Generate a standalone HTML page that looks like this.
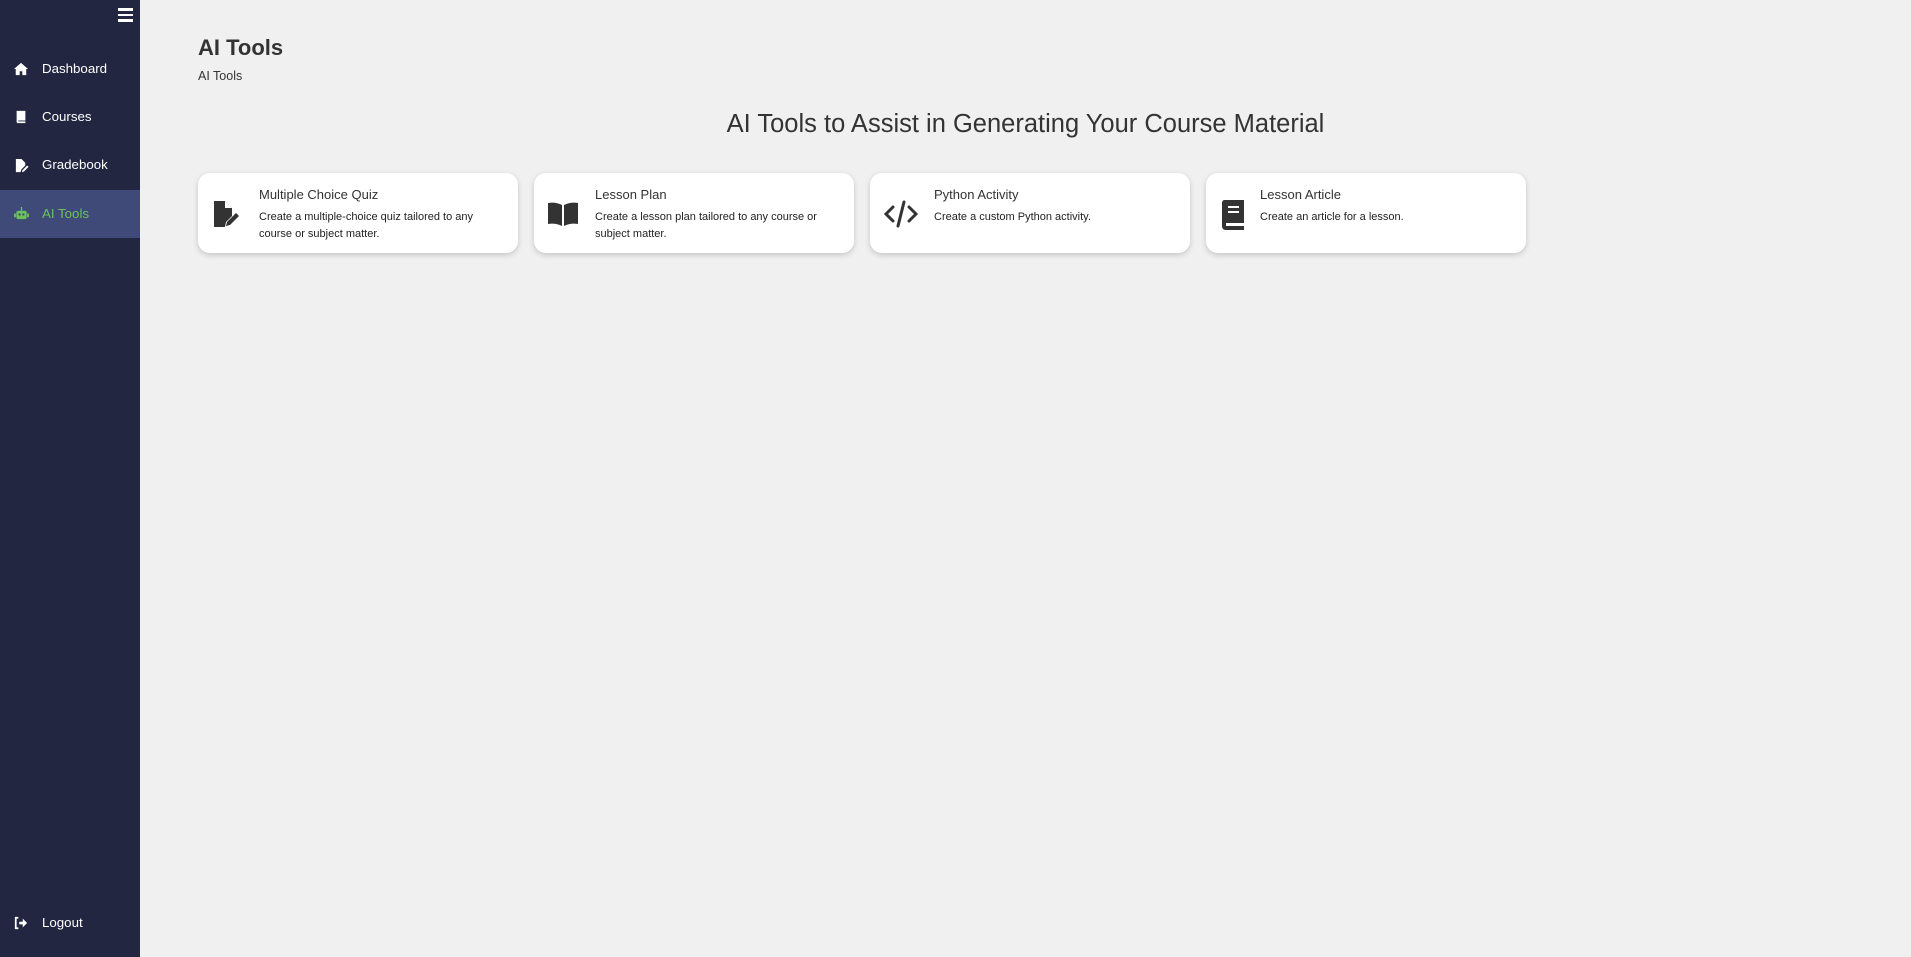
<!DOCTYPE html>
<html><head><meta charset="utf-8"><style>
*{box-sizing:border-box;margin:0;padding:0}
body{width:1911px;height:957px;background:#f0f0f0;font-family:"Liberation Sans",sans-serif;color:#333;position:relative;overflow:hidden}
.sb{position:absolute;left:0;top:0;width:140px;height:957px;background:#222640}
.ham{position:absolute;left:118px;top:8px;width:15px}
.ham i{display:block;height:2.5px;background:#fff;margin-bottom:3px}
.nav{position:absolute;left:0;width:140px;height:48px;color:#fff;font-size:13.3px;line-height:48px}
.nav svg{position:absolute;left:14px;top:17px}
.nav span{position:absolute;left:42px}
.act{background:#3f4a78;color:#6cc15a}
h1{position:absolute;left:198px;top:35px;font-size:22px;font-weight:bold;color:#333}
.sub{position:absolute;left:198px;top:69px;font-size:12.5px}
h2{position:absolute;left:0;right:0;padding-left:140px;text-align:center;top:110px;font-size:25.5px;font-weight:normal;color:#333}
.card{position:absolute;top:173px;width:320px;height:80px;background:#fff;border-radius:12px;box-shadow:0 2px 6px rgba(0,0,0,.18)}
.card svg{position:absolute;left:14px;top:26px}
.card .t{position:absolute;left:61px;top:14px;font-size:13px;color:#333}
.card .d{position:absolute;left:61px;top:36px;font-size:11px;line-height:17px;color:#222;width:250px}
</style></head><body>
<div class="sb">
<div class="ham"><i></i><i></i><i></i></div>
<div class="nav" style="top:45px"><svg width="14" height="14" viewBox="0 0 16 16"><path d="M8 1L0 8h2v7h4.5v-4.5h3V15H14V8h2z" fill="#fff"/></svg><span>Dashboard</span></div>
<div class="nav" style="top:93px"><svg width="14" height="14" viewBox="0 0 16 16"><path d="M3 1h10v11H5v1h8v2H4a2 2 0 0 1-1-1.5zM6 4h5v1H6zm0 2.5h5v1H6z" fill="#fff"/></svg><span>Courses</span></div>
<div class="nav" style="top:141px"><svg width="15" height="15" viewBox="0 0 16 16"><path d="M2 1h6l4 4v3l-4 4-1 3H2z" fill="#fff"/><path d="M9 13l5-5 1.5 1.5-5 5-2 .5z" fill="#fff"/></svg><span>Gradebook</span></div>
<div class="nav act" style="top:190px"><svg width="15" height="14" viewBox="0 0 16 15"><rect x="2.5" y="4" width="11" height="9" rx="2" fill="#6cc15a"/><rect x="0" y="7" width="2" height="4" fill="#6cc15a"/><rect x="14" y="7" width="2" height="4" fill="#6cc15a"/><rect x="7.3" y="0" width="1.4" height="4" fill="#6cc15a"/><circle cx="6" cy="8" r="1.2" fill="#3f4a78"/><circle cx="10" cy="8" r="1.2" fill="#3f4a78"/></svg><span>AI Tools</span></div>
<div class="nav" style="top:899px"><svg width="14" height="14" viewBox="0 0 16 16"><path d="M5 2H2v12h3" stroke="#fff" stroke-width="2" fill="none"/><path d="M6 6.5h4V3l5 5-5 5V9.5H6z" fill="#fff"/></svg><span>Logout</span></div>
</div>
<h1>AI Tools</h1>
<div class="sub">AI Tools</div>
<h2>AI Tools to Assist in Generating Your Course Material</h2>
<div class="card" style="left:198px"><svg width="30" height="30" viewBox="0 0 30 30"><path d="M2 2h11l7 7v8l-6 6-1 5H2z" fill="#333"/><path d="M13 2v7h7z" fill="#fff"/><path d="M15 23l9-9 3 3-9 9-4 1z" fill="#333"/></svg><div class="t">Multiple Choice Quiz</div><div class="d">Create a multiple-choice quiz tailored to any course or subject matter.</div></div>
<div class="card" style="left:534px"><svg width="30" height="30" viewBox="0 0 30 30"><path d="M0 4c5-1 10 0 14 2v21c-4-2-9-3-14-2z M16 6c4-2 9-3 14-2v21c-5-1-10 0-14 2z" fill="#333"/></svg><div class="t">Lesson Plan</div><div class="d">Create a lesson plan tailored to any course or subject matter.</div></div>
<div class="card" style="left:870px"><svg width="34" height="30" viewBox="0 0 34 30"><path d="M9 8l-7 7 7 7M25 8l7 7-7 7M20 3l-6 24" stroke="#333" stroke-width="3" fill="none" stroke-linecap="round"/></svg><div class="t" style="left:64px">Python Activity</div><div class="d" style="left:64px">Create a custom Python activity.</div></div>
<div class="card" style="left:1206px"><svg width="26" height="32" viewBox="0 0 26 32"><path d="M4 1h20v23H6v3h18v4H5a4 4 0 0 1-3-3.5V4a3 3 0 0 1 2-3z" fill="#333"/><rect x="8" y="7" width="11" height="2" fill="#fff"/><rect x="8" y="12" width="11" height="2" fill="#fff"/></svg><div class="t" style="left:54px">Lesson Article</div><div class="d" style="left:54px">Create an article for a lesson.</div></div>
</body></html>
